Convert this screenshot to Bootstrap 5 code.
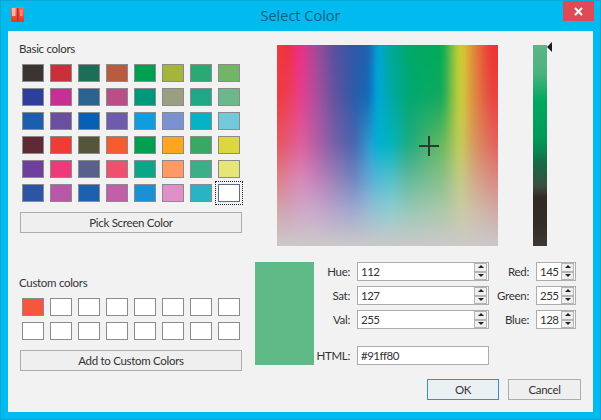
<!DOCTYPE html>
<html lang="en">
<head>
    <title>Select Color</title>
    <link href="https://cdn.jsdelivr.net/npm/bootstrap@5.3.3/dist/css/bootstrap.min.css" rel="stylesheet">
    <style>
        html, body {
            height: 100%;
        }
        body {
            background: #00baf0;
            font-family: Lato, "Liberation Sans", sans-serif;
            font-size: 11.5px;
            letter-spacing: -0.3px;
            color: #333;
            overflow: hidden;
        }
        .win-frame {
            width: 601px;
            height: 420px;
            padding: 0 7px 7px;
            border: 1px solid #0aa6d8;
            border-bottom-color: #05a8d8;
        }
        .title-bar {
            display: grid;
            grid-template-columns: 1fr auto 1fr;
            height: 31px;
            margin: -1px 0 0;
        }
        .title-text {
            font-family: "Open Sans", sans-serif;
            font-size: 14.5px;
            letter-spacing: 0;
            line-height: 31px;
            color: #17607f;
        }
        .app-icon {
            margin: 7px 0 0 3px;
        }
        .close-btn {
            width: 31px;
            height: 20px;
            margin: 1px -1px 0 0;
            background: #e04a55;
        }
        .dlg-body {
            height: 381px;
            padding: 10px 12px 0;
            background: #f3f2f3;
            gap: 13px;
        }
        .left-col {
            width: 222px;
        }
        .right-col {
            width: 326px;
            padding-top: 4px;
        }
        .group-label {
            height: 16px;
            line-height: 16px;
            margin-left: -1px;
        }
        .swatch-grid {
            display: grid;
            grid-template-columns: repeat(8, 22px);
            grid-auto-rows: 18px;
            gap: 6px;
            margin: 7px 0 10px;
            padding-left: 2px;
        }
        .swatch {
            border: 1px solid #8b8b8b;
            background: #fff;
        }
        .swatch-current {
            border-color: #5d6b86;
            outline: 1px dotted #222;
            outline-offset: 2px;
        }
        .custom-label {
            margin-top: 42px;
        }
        .qt-btn {
            height: 21px;
            padding: 0;
            border: 1px solid #adadad;
            border-radius: 0;
            background: #efefef;
            font-size: 11.5px;
            letter-spacing: -0.3px;
            line-height: 19px;
            color: #333;
        }
        .qt-btn-default {
            border-color: #3a8fc8;
            background: #ebf0f3;
        }
        .ok-btn {
            width: 72px;
        }
        .cancel-btn {
            width: 73px;
        }
        .picker-row {
            padding-left: 22px;
        }
        .picker-box {
            width: 221px;
            height: 201px;
        }
        .picker-box canvas {
            display: block;
        }
        .cross-h, .cross-v {
            position: absolute;
            background: #2b3b33;
        }
        .cross-h {
            left: 142px;
            top: 100px;
            width: 20px;
            height: 2px;
        }
        .cross-v {
            left: 151px;
            top: 91px;
            width: 2px;
            height: 20px;
        }
        .val-slider {
            width: 14px;
            height: 201px;
            margin-left: 35px;
            background: linear-gradient(#5cb585 0%, #4cb27e 14%, #00a860 28%, #009a58 46%, #0a8450 53%, #136c48 58%, #3a4f40 70%, #332a24 76%, #332b25 88%, #3e3832 100%);
        }
        .val-arrow {
            position: absolute;
            left: 14px;
            top: -3px;
            width: 0;
            height: 0;
            border-top: 5px solid transparent;
            border-bottom: 5px solid transparent;
            border-right: 5px solid #1c1c1c;
        }
        .lower-row {
            margin-top: 16px;
        }
        .color-preview {
            width: 59px;
            height: 103px;
            background: #5fba87;
        }
        .spin-form {
            display: grid;
            grid-template-columns: 36px 132px 33px 40px;
            grid-auto-rows: 19px;
            column-gap: 7px;
            row-gap: 5px;
        }
        .spin-form label {
            line-height: 19px;
            text-align: right;
        }
        .html-label {
            margin-top: 12px;
        }
        .spin-box {
            height: 19px;
            border: 1px solid #adadad;
            background: #fff;
        }
        .html-box {
            margin-top: 12px;
        }
        .spin-box input {
            min-width: 0;
            width: 100%;
            height: 17px;
            padding: 0 0 0 3px;
            border: 0;
            border-radius: 0;
            background: transparent;
            font-size: 11.5px;
            letter-spacing: -0.5px;
            line-height: 17px;
            color: #333;
        }
        .spin-btns {
            flex: 0 0 13px;
            width: 13px;
            margin: 0 1px 0 0;
        }
        .spin-up, .spin-down {
            display: block;
            height: 8.5px;
            border: 1px solid #b4b4b4;
            background: #efefef;
            position: relative;
        }
        .spin-up::after, .spin-down::after {
            content: "";
            position: absolute;
            left: 2.5px;
            width: 0;
            height: 0;
            border-left: 3px solid transparent;
            border-right: 3px solid transparent;
        }
        .spin-up::after {
            top: 1px;
            border-bottom: 3px solid #222;
        }
        .spin-down::after {
            top: 1px;
            border-top: 3px solid #222;
        }
        .dlg-buttons {
            margin-top: 14px;
            gap: 9px;
        }
    </style>
</head>
<body>

<div class="win-frame">
    <!-- Title bar -->
    <div class="title-bar">
        <div>
            <svg class="app-icon" width="14" height="16" viewBox="0 0 14 16">
                <defs>
                    <linearGradient id="bookFill" x1="0" y1="0" x2="0" y2="1">
                        <stop offset="0" stop-color="#f4705c"/>
                        <stop offset="1" stop-color="#e4381f"/>
                    </linearGradient>
                </defs>
                <rect x="0" y="0" width="13" height="15" rx="1.5" fill="url(#bookFill)"/>
                <rect x="1" y="1" width="3.5" height="8" fill="#f8b5a4"/>
                <rect x="6" y="1" width="1.5" height="13" fill="#b82a20"/>
                <rect x="9" y="3" width="2.5" height="6" fill="#f58a78"/>
            </svg>
        </div>
        <div class="title-text">Select Color</div>
        <div class="d-flex justify-content-end">
            <div class="close-btn d-flex align-items-center justify-content-center">
                <svg width="9" height="9" viewBox="0 0 9 9">
                    <path d="M1 1 L8 8 M8 1 L1 8" stroke="#fff" stroke-width="2"/>
                </svg>
            </div>
        </div>
    </div>

    <div class="dlg-body d-flex">
        <!-- Left column -->
        <div class="left-col d-flex flex-column">
            <div class="group-label">Basic colors</div>
            <div class="swatch-grid" id="basicColors"></div>
            <button type="button" class="btn qt-btn w-100">Pick Screen Color</button>

            <div class="group-label custom-label">Custom colors</div>
            <div class="swatch-grid" id="customColors"></div>
            <button type="button" class="btn qt-btn w-100">Add to Custom Colors</button>
        </div>

        <!-- Right column -->
        <div class="right-col">
            <div class="picker-row d-flex">
                <div class="picker-box position-relative">
                    <canvas id="picker" width="221" height="201"></canvas>
                    <div class="cross-h"></div>
                    <div class="cross-v"></div>
                </div>
                <div class="val-slider position-relative">
                    <div class="val-arrow"></div>
                </div>
            </div>

            <div class="lower-row d-flex">
                <div class="color-preview"></div>
                <div class="spin-form">
                    <label>Hue:</label>
                    <div class="spin-box d-flex align-items-center"><input class="form-control shadow-none" value="112"><div class="spin-btns"><span class="spin-up"></span><span class="spin-down"></span></div></div>
                    <label>Red:</label>
                    <div class="spin-box d-flex align-items-center"><input class="form-control shadow-none" value="145"><div class="spin-btns"><span class="spin-up"></span><span class="spin-down"></span></div></div>

                    <label>Sat:</label>
                    <div class="spin-box d-flex align-items-center"><input class="form-control shadow-none" value="127"><div class="spin-btns"><span class="spin-up"></span><span class="spin-down"></span></div></div>
                    <label>Green:</label>
                    <div class="spin-box d-flex align-items-center"><input class="form-control shadow-none" value="255"><div class="spin-btns"><span class="spin-up"></span><span class="spin-down"></span></div></div>

                    <label>Val:</label>
                    <div class="spin-box d-flex align-items-center"><input class="form-control shadow-none" value="255"><div class="spin-btns"><span class="spin-up"></span><span class="spin-down"></span></div></div>
                    <label>Blue:</label>
                    <div class="spin-box d-flex align-items-center"><input class="form-control shadow-none" value="128"><div class="spin-btns"><span class="spin-up"></span><span class="spin-down"></span></div></div>

                    <label class="html-label">HTML:</label>
                    <div class="spin-box html-box d-flex align-items-center"><input class="form-control shadow-none" value="#91ff80"></div>
                </div>
            </div>

            <div class="dlg-buttons d-flex justify-content-end">
                <button type="button" class="btn qt-btn qt-btn-default ok-btn">OK</button>
                <button type="button" class="btn qt-btn cancel-btn">Cancel</button>
            </div>
        </div>
    </div>
</div>

<script>
    const basicColors = [
        '#3a3432', '#c9303a', '#1d6e57', '#b85c3f', '#00a050', '#a5b43a', '#2ba874', '#72b566',
        '#2d3f9a', '#c62f94', '#2a6290', '#b84f88', '#00987a', '#9b9e80', '#1ea888', '#6cb88a',
        '#1b5eac', '#6a4ea0', '#0860b4', '#6c5cab', '#0f9de0', '#7a93d0', '#05b4c4', '#74c8dc',
        '#5e2a36', '#f03c34', '#55553a', '#f55a30', '#00a050', '#ffa520', '#3aa865', '#dcd73c',
        '#6f3f9f', '#ee3a7a', '#58608c', '#f05070', '#0ba688', '#ff9a66', '#3cae88', '#e6e678',
        '#2c55a5', '#b858a8', '#1e60b0', '#c060a8', '#1c90d4', '#e090c8', '#28b4c4', '#ffffff'
    ];

    function fillSwatches(id, colors) {
        const grid = document.getElementById(id);
        colors.forEach((color, index) => {
            const box = document.createElement('div');
            box.className = 'swatch';
            box.style.background = color;
            grid.appendChild(box);
        });
    }

    fillSwatches('basicColors', basicColors);
    document.getElementById('basicColors').lastChild.classList.add('swatch-current');

    const customColors = new Array(16).fill('#ffffff');
    customColors[0] = '#f5563c';
    fillSwatches('customColors', customColors);

    // colour field: control points read off the picture, blended between them
    const xStops = [0, 30, 70, 120, 170, 230, 280, 300, 340, 400, 500, 530, 555, 590, 640, 666];
    const yStops = [0, 150, 300, 400, 500, 606];
    const field = [
        ['#ee3a3c', '#ee3040', '#ec2f88', '#a04a98', '#5a4f9f', '#3058a8', '#1f62b0', '#00a5e0', '#00a89a', '#00a86a', '#00ab55', '#85c040', '#d6d52c', '#e08e3a', '#ec3a38', '#ee3030'],
        ['#ee3c40', '#ee3c50', '#e83c90', '#a84f9c', '#66529f', '#2c5aa8', '#0f6cb8', '#00a8de', '#00a8a8', '#00a870', '#10a95c', '#8ac044', '#cfd23a', '#dd9340', '#e84a40', '#ea4040'],
        ['#e55a5c', '#e4587a', '#e0609c', '#b05ea5', '#7a60a8', '#4a64ae', '#2a9ed2', '#00b0d0', '#00b4c0', '#20ab80', '#6ab85e', '#a0c25c', '#c8cf58', '#d69a60', '#e0705c', '#e46060'],
        ['#dc8080', '#dc80a0', '#d888b8', '#c080b8', '#9a80b8', '#6e84c0', '#5ea8d4', '#50b8d8', '#50c0cc', '#60b898', '#88c088', '#acc488', '#c6cc84', '#d0ac88', '#d88e84', '#da8880'],
        ['#d0a8a8', '#d0a4b8', '#d0a8c8', '#c8a8cc', '#b4a4cc', '#a0a8d0', '#98bcd4', '#90c4d4', '#90ccd0', '#98c8b8', '#acc8a8', '#bcc8a8', '#c8cca4', '#cec0a8', '#d0b0a8', '#d0a8a4'],
        new Array(16).fill('#cbc9c9')
    ].map(row => row.map(hex => [1, 3, 5].map(i => parseInt(hex.substr(i, 2), 16))));

    function findStop(stops, value) {
        let i = 0;
        while (i < stops.length - 2 && value > stops[i + 1]) i++;
        return [i, (value - stops[i]) / (stops[i + 1] - stops[i])];
    }

    function fieldColor(px, py, k) {
        const [r, fy] = findStop(yStops, Math.min(200, Math.max(0, py)) * 606 / 200);
        const [c, fx] = findStop(xStops, Math.min(220, Math.max(0, px)) * 666 / 220);
        const top = field[r][c][k] * (1 - fx) + field[r][c + 1][k] * fx;
        const bottom = field[r + 1][c][k] * (1 - fx) + field[r + 1][c + 1][k] * fx;
        return top * (1 - fy) + bottom * fy;
    }

    function drawPicker() {
        const ctx = document.getElementById('picker').getContext('2d');
        const img = ctx.createImageData(221, 201);
        for (let py = 0; py < 201; py++) {
            for (let px = 0; px < 221; px++) {
                for (let k = 0; k < 3; k++) {
                    // average a few neighbours so the control points leave no seams
                    let sum = 0;
                    for (let dx = -4; dx <= 4; dx += 2) {
                        for (let dy = -6; dy <= 6; dy += 3) {
                            sum += fieldColor(px + dx, py + dy, k);
                        }
                    }
                    img.data[(py * 221 + px) * 4 + k] = sum / 25;
                }
                img.data[(py * 221 + px) * 4 + 3] = 255;
            }
        }
        ctx.putImageData(img, 0, 0);
    }

    drawPicker();
</script>

<script src="https://cdn.jsdelivr.net/npm/bootstrap@5.3.3/dist/js/bootstrap.bundle.min.js"></script>

</body>
</html>
